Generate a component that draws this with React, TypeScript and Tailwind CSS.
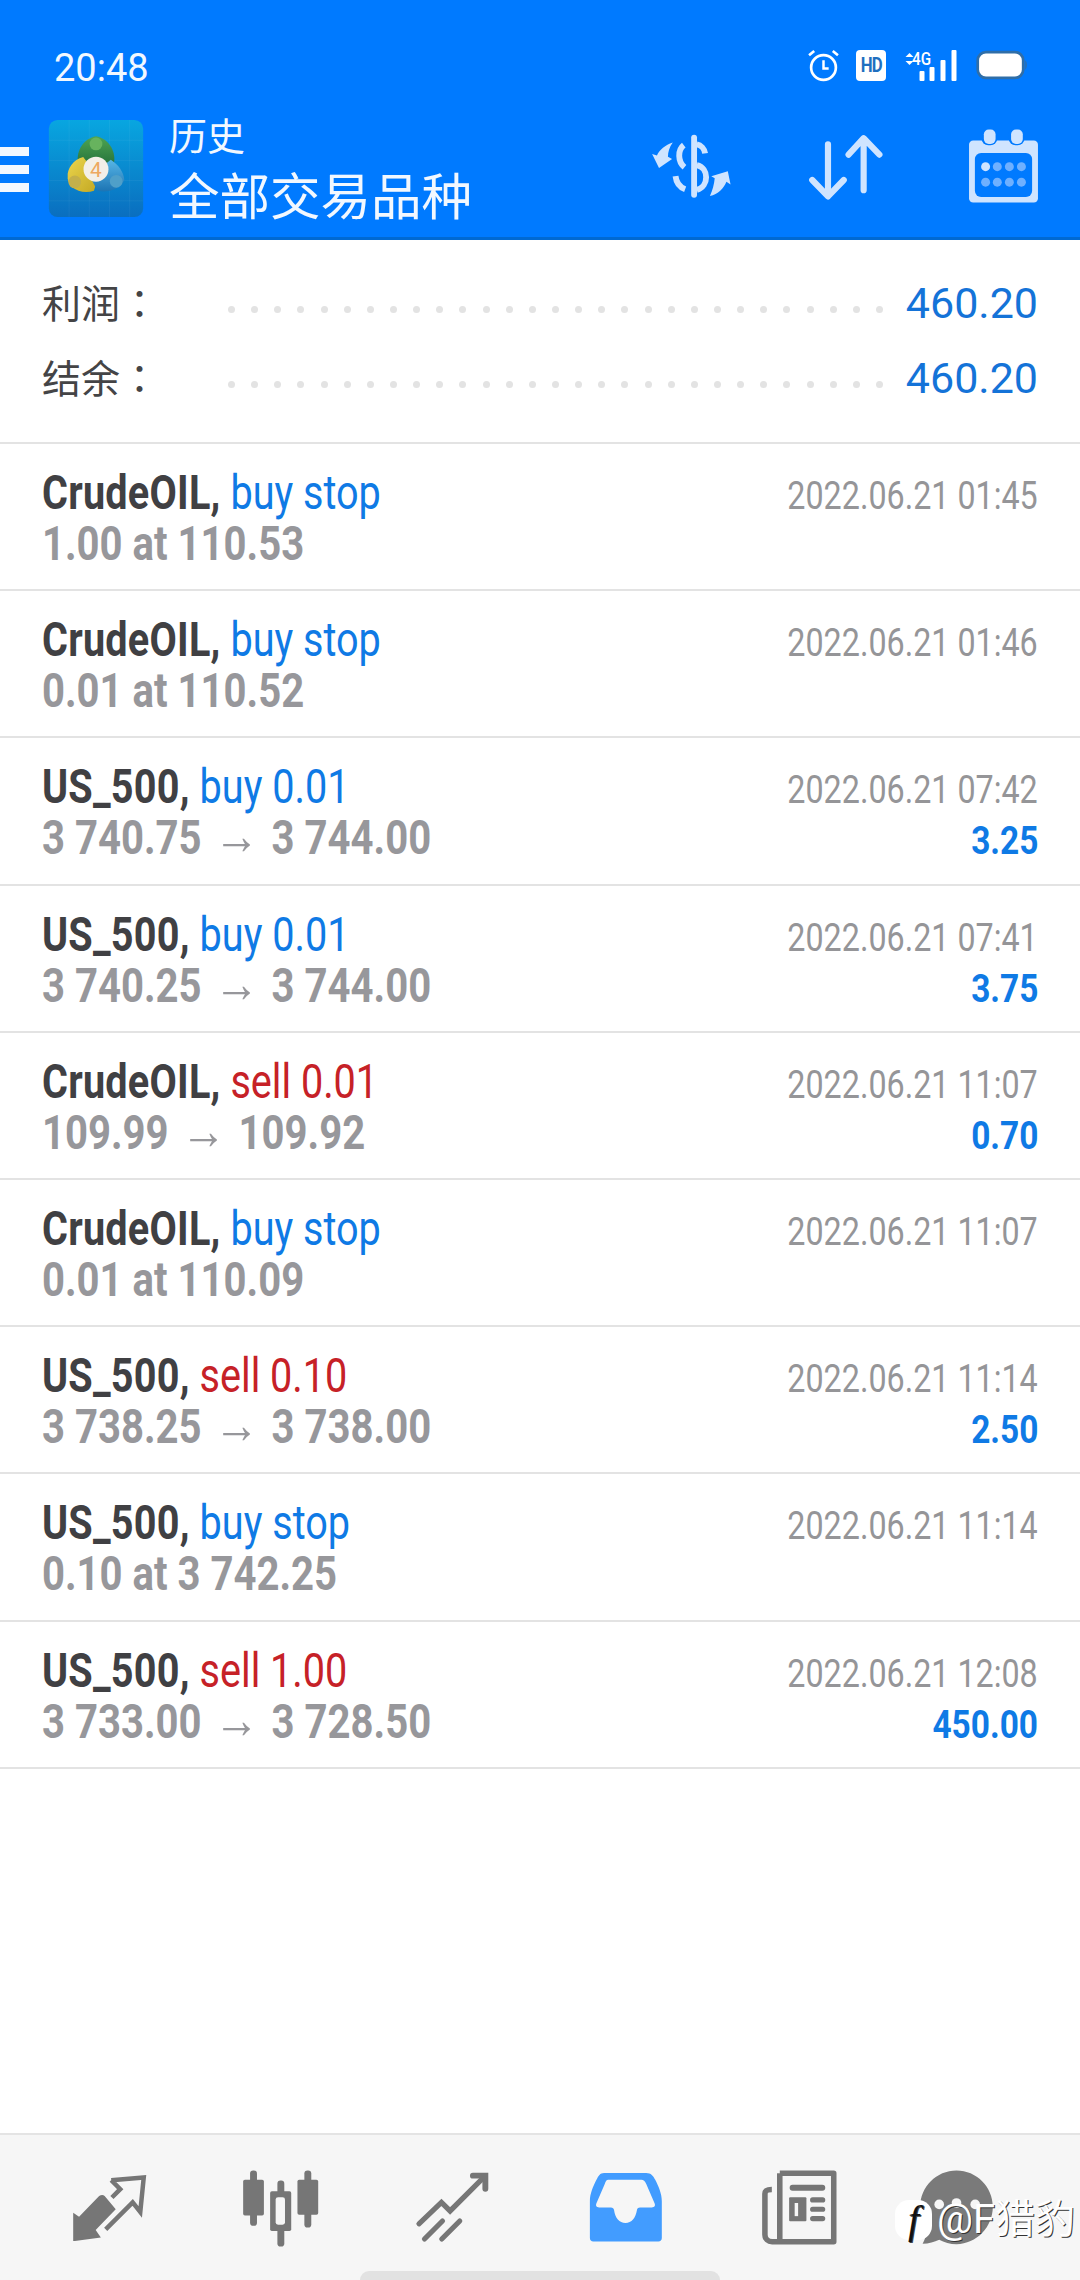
const ROWS = [
  { sym: "CrudeOIL", act: "buy stop", side: "buy", sub: "1.00 at 110.53", time: "2022.06.21 01:45" },
  { sym: "CrudeOIL", act: "buy stop", side: "buy", sub: "0.01 at 110.52", time: "2022.06.21 01:46" },
  { sym: "US_500", act: "buy 0.01", side: "buy", sub: "3 740.75 → 3 744.00", time: "2022.06.21 07:42", profit: "3.25" },
  { sym: "US_500", act: "buy 0.01", side: "buy", sub: "3 740.25 → 3 744.00", time: "2022.06.21 07:41", profit: "3.75" },
  { sym: "CrudeOIL", act: "sell 0.01", side: "sell", sub: "109.99 → 109.92", time: "2022.06.21 11:07", profit: "0.70" },
  { sym: "CrudeOIL", act: "buy stop", side: "buy", sub: "0.01 at 110.09", time: "2022.06.21 11:07" },
  { sym: "US_500", act: "sell 0.10", side: "sell", sub: "3 738.25 → 3 738.00", time: "2022.06.21 11:14", profit: "2.50" },
  { sym: "US_500", act: "buy stop", side: "buy", sub: "0.10 at 3 742.25", time: "2022.06.21 11:14" },
  { sym: "US_500", act: "sell 1.00", side: "sell", sub: "3 733.00 → 3 728.50", time: "2022.06.21 12:08", profit: "450.00" },
];

function Logo() {
  return (
    <svg viewBox="138 360 280 288" className="w-[96px] h-[97px] ml-[19px] shrink-0">
      <defs>
        <linearGradient id="lg" x1="0" y1="0" x2="0" y2="1">
          <stop offset="0" stopColor="#08a6e0" />
          <stop offset="1" stopColor="#0a6ebf" />
        </linearGradient>
        <linearGradient id="gr" x1="0" y1="0" x2="0" y2="1">
          <stop offset="0" stopColor="#4fa552" />
          <stop offset="1" stopColor="#1f6b38" />
        </linearGradient>
        <linearGradient id="ye" x1="0" y1="0" x2="1" y2="1">
          <stop offset="0" stopColor="#ecd64e" />
          <stop offset="1" stopColor="#c2a722" />
        </linearGradient>
        <linearGradient id="bl" x1="0" y1="0" x2="0" y2="1">
          <stop offset="0" stopColor="#58b6e6" />
          <stop offset="1" stopColor="#1c74b4" />
        </linearGradient>
      </defs>
      <rect x="138" y="360" width="280" height="288" rx="26" fill="url(#lg)" />
      <path d="M138 420h280M138 480h280M138 540h280M138 600h280M198 360v288M258 360v288M318 360v288M378 360v288" stroke="#ffffff" strokeOpacity="0.08" strokeWidth="2" />
      <path d="M278 408c-36 6-58 42-54 76l30 22h48l30-22c4-34-18-70-54-76z" fill="url(#gr)" />
      <circle cx="278" cy="431" r="19" fill="#67b35e" />
      <path d="M240 470c-30 6-48 38-46 56-2 10 4 22 12 32 18 16 44 20 66 12l12-42z" fill="url(#ye)" />
      <circle cx="215" cy="544" r="19" fill="#c4b04a" />
      <path d="M322 478c22 14 38 36 40 60-12 26-48 40-80 32l-22-42z" fill="url(#bl)" />
      <circle cx="338" cy="542" r="19" fill="#4f9fc9" />
      <circle cx="278" cy="506" r="37" fill="#f3efe8" />
      <text x="278" y="528" textAnchor="middle" fontSize="62" fill="#eda860" fontFamily="Roboto">4</text>
    </svg>
  );
}

function DollarIcon() {
  return (
    <svg viewBox="310 400 250 200" className="w-[86px] h-[69px]" fill="none">
      <g stroke="#cfe4ff" strokeWidth="17" strokeLinecap="round">
        <path d="M444 416v166" />
        <path d="M476 462c-2-14-12-24-24-26" strokeLinecap="butt" />
        <path d="M414 438c-18 14-18 48 2 64" strokeLinecap="butt" />
        <path d="M452 496c36 8 36 62 0 72" strokeLinecap="butt" />
        <path d="M390 528c2 18 12 32 28 38" strokeLinecap="butt" />
      </g>
      <path d="M382 430c-10 14-14 28-14 42l12 6-38 26-20-40 14 4c8-18 24-30 46-38z" fill="#cfe4ff" />
      <path d="M490 586c8-18 12-34 14-52l-10-6 48-14 8 38-12-8c-8 20-24 36-48 42z" fill="#cfe4ff" />
    </svg>
  );
}

function SortIcon() {
  return (
    <svg viewBox="770 400 240 210" className="w-[83px] h-[72px]" fill="none" stroke="#cfe4ff" strokeWidth="18" strokeLinecap="round" strokeLinejoin="round">
      <path d="M836 436v150M790 540l46 48 46-48" />
      <path d="M940 570V420M896 466l44-48 46 48" />
    </svg>
  );
}

function CalendarIcon() {
  return (
    <svg viewBox="1240 390 206 220" className="w-[71px] h-[76px]">
      <rect x="1243" y="426" width="200" height="180" rx="12" fill="#cfe4ff" />
      <rect x="1260" y="462" width="166" height="128" rx="18" fill="#007aff" />
      <rect x="1279" y="388" width="46" height="52" rx="20" fill="#007aff" />
      <rect x="1358" y="388" width="46" height="52" rx="20" fill="#007aff" />
      <rect x="1286" y="394" width="34" height="42" rx="14" fill="#cfe4ff" />
      <rect x="1365" y="394" width="34" height="42" rx="14" fill="#cfe4ff" />
      <circle cx="1291" cy="502" r="13" fill="#cfe4ff" />
      {[1325, 1360, 1395].map((x) => <circle key={x} cx={x} cy="502" r="13" fill="#6fb0ff" />)}
      {[1291, 1325, 1360, 1395].map((x) => <circle key={x} cx={x} cy="547" r="13" fill="#6fb0ff" />)}
    </svg>
  );
}

function StatusIcons() {
  return (
    <div className="flex items-center text-white">
      <svg viewBox="0 0 32 32" className="w-[33px] h-[33px]" fill="none" stroke="#fff" strokeWidth="2.6">
        <circle cx="16" cy="18" r="12" />
        <path d="M16 11v8h5" strokeWidth="2.4" />
        <path d="M2 6l5-4M30 6l-5-4" />
      </svg>
      <div className="ml-[16px] w-[30px] h-[31px] bg-white rounded-[4px] flex items-center justify-center">
        <span className="text-[#1f6fbf] font-bold text-[21px] leading-none tracking-[-1px] scale-x-[0.8]">HD</span>
      </div>
      <div className="relative ml-[15px] w-[57px] h-[31px]">
        <svg viewBox="0 0 56 31" className="w-[57px] h-[31px]" fill="#fff">
          <path d="M4 7l4-4 4 4zM4 11l4 4 4-4z" />
          <rect x="18" y="21" width="5" height="10" rx="1" />
          <rect x="28" y="17" width="5" height="14" rx="1" />
          <rect x="39" y="10" width="5" height="21" rx="1" />
          <rect x="50" y="0" width="5" height="31" rx="1" />
        </svg>
        <span className="absolute left-[11px] top-[-1px] text-[19px] leading-[20px] font-medium scale-x-[0.8] origin-left">4G</span>
      </div>
      <svg viewBox="0 0 50 30" className="ml-[18px] w-[52px] h-[31px]">
        <rect x="1.5" y="2" width="44" height="25" rx="8" fill="#fff" stroke="#2f6ea8" strokeWidth="2.6" />
        <path d="M47.5 10c2 1 2 8 0 9z" fill="#2f6ea8" />
      </svg>
    </div>
  );
}

function Header() {
  return (
    <header className="bg-[#007aff] border-b-[3px] border-[#0069d2] h-[240px] shrink-0 text-[#f2f8ff]">
      <div className="h-[120px] pl-[54px] pr-[52px] pt-[49px] flex items-start justify-between">
        <span className="text-[38px] leading-[38px]">20:48</span>
        <StatusIcons />
      </div>
      <div className="flex items-start h-[117px]">
        <div className="w-[29px] mt-[27px] flex flex-col gap-[9px] shrink-0">
          <div className="h-[9px] bg-[#f2f8ff]" />
          <div className="h-[9px] bg-[#f2f8ff]" />
          <div className="h-[9px] bg-[#f2f8ff]" />
        </div>
        <Logo />
        <div className="ml-[25px] -mt-[3px]">
          <div className="text-[38px] leading-[40px]">历史</div>
          <div className="text-[50.5px] leading-[60px] mt-[11px] whitespace-nowrap">全部交易品种</div>
        </div>
        <div className="ml-auto flex items-start mt-[12px] mr-[41px]">
          <DollarIcon />
          <div className="ml-[71px]"><SortIcon /></div>
          <div className="ml-[80px] -mt-[4px]"><CalendarIcon /></div>
        </div>
      </div>
    </header>
  );
}

function SummaryRow({ label, value }: { label: string; value: string }) {
  return (
    <div className="flex items-center h-[75px]">
      <span className="text-[39px] w-[186px] shrink-0 text-[#444446] whitespace-nowrap">
        {label}
        <span className="font-['Noto_Sans_CJK_TC',sans-serif]">：</span>
      </span>
      <div className="flex-1 flex justify-between mt-[12px]">
        {Array.from({ length: 29 }).map((_, i) => (
          <span key={i} className="w-[7px] h-[7px] rounded-full bg-[#e3e3e3]" />
        ))}
      </div>
      <span className="w-[155px] text-right text-[43px] text-[#1473d8]">{value}</span>
    </div>
  );
}

function SubLine({ text }: { text: string }) {
  const parts = text.split("→");
  if (parts.length < 2) return <>{text}</>;
  return (
    <>
      {parts[0]}
      <span className="font-['Liberation_Sans',sans-serif] font-normal text-[54px] leading-[0] mx-[3px]">→</span>
      {parts[1]}
    </>
  );
}

function Row({ sym, act, side, sub, time, profit }: (typeof ROWS)[number] & { profit?: string }) {
  return (
    <div className="h-[147.2px] border-b-2 border-[#e3e3e3] pl-[42px] pr-[42px] pt-[23px] flex justify-between">
      <div className="whitespace-nowrap">
        <div className="text-[48px] leading-[51px] origin-left scale-x-[0.825] w-0">
          <span className="font-bold text-[#404043] tracking-[0.3px]">{sym},</span>{" "}
          <span className={side === "sell" ? "text-[#c62127]" : "text-[#0f7ae5]"}>{act}</span>
        </div>
        <div className="text-[48px] leading-[51px] font-bold text-[#97979b] origin-left scale-x-[0.835] w-0">
          <SubLine text={sub} />
        </div>
      </div>
      <div className="flex flex-col items-end whitespace-nowrap">
        <div className="text-[39px] leading-[51px] mt-[4px] text-[#959598] origin-right scale-x-[0.827]">{time}</div>
        {profit && <div className="text-[38px] leading-[51px] font-bold text-[#0f7ae5] origin-right scale-x-[0.88]">{profit}</div>}
      </div>
    </div>
  );
}

const GREY = "#767676";

function NavBar() {
  return (
    <nav className="h-[147px] shrink-0 bg-[#f6f6f6] border-t-2 border-[#e4e4e4] relative">
      <div className="flex pt-[31px]">
        <svg viewBox="200 165 240 240" className="w-[83px] h-[83px] ml-[68px]">
          <path d="M215 300l17 12 58-60c6-4 12-4 16 0l32 38-58 60 15 22-75 10h-5z" fill={GREY} />
          <path d="M325 206l94-8-10 100-22-28-78 78M325 206l26 26-24 24" fill="none" stroke={GREY} strokeWidth="13" strokeLinejoin="miter" />
        </svg>
        <svg viewBox="697 165 240 240" className="w-[83px] h-[83px] ml-[88px]">
          <rect x="729" y="178" width="20" height="160" rx="9" fill={GREY} />
          <rect x="709" y="205" width="60" height="103" rx="5" fill={GREY} />
          <rect x="808" y="207" width="20" height="191" rx="9" fill={GREY} />
          <rect x="787" y="238" width="61" height="115" rx="5" fill={GREY} />
          <rect x="803" y="255" width="27" height="80" rx="7" fill="#f6f6f6" />
          <rect x="886" y="178" width="20" height="165" rx="9" fill={GREY} />
          <rect x="866" y="205" width="60" height="101" rx="5" fill={GREY} />
        </svg>
        <svg viewBox="1197 165 240 240" className="w-[83px] h-[83px] ml-[89px]" fill="none" stroke={GREY} strokeWidth="15" strokeLinecap="round" strokeLinejoin="miter">
          <path d="M1220 332l65-62 25 25 95-95" />
          <path d="M1376 193h36v38" strokeWidth="17" />
          <path d="M1236 376l52-52M1286 376l52-52" />
        </svg>
        <svg viewBox="130 165 240 240" className="w-[83px] h-[83px] ml-[90px]">
          <path d="M188 185h122c14 0 20 8 26 20 10 20 19 40 19 62v106c0 6-4 10-10 10H157c-6 0-10-4-10-10V267c0-22 9-42 19-62 6-12 10-20 22-20z" fill="#429cff" />
          <path d="M200 205h96c6 0 10 4 14 12l24 56c3 7 0 12-8 12h-34c-6 0-8 3-9 8-4 22-15 37-33 37s-30-15-33-37c-1-5-4-8-9-8h-34c-8 0-11-5-8-12l24-56c3-8 5-12 10-12z" fill="#f6f6f6" />
        </svg>
        <svg viewBox="635 165 240 240" className="w-[83px] h-[83px] ml-[91px]" fill="none">
          <path d="M698 186h156v198H676c-12 0-21-8-21-20V245c0-8 6-12 20-12" stroke={GREY} strokeWidth="16" strokeLinejoin="round" />
          <path d="M698 186v198" stroke={GREY} strokeWidth="16" />
          <path d="M735 228h86" stroke={GREY} strokeWidth="17" strokeLinecap="round" />
          <rect x="725" y="255" width="50" height="70" rx="3" fill={GREY} />
          <rect x="741" y="272" width="10" height="38" fill="#f6f6f6" />
          <path d="M793 263h29M793 290h29M793 317h29" stroke={GREY} strokeWidth="15" strokeLinecap="round" />
        </svg>
        <svg viewBox="1090 165 240 240" className="w-[83px] h-[83px] ml-[74px]">
          <path d="M1210 178c58 0 105 47 105 105s-47 108-105 108c-18 0-36-5-50-13-14 6-30 12-48 12 8-14 12-28 10-44-12-18-17-40-17-63 0-58 47-105 105-105z" fill="#7a7a7a" />
          <circle cx="1160" cy="276" r="14" fill="#f6f6f6" />
          <circle cx="1210" cy="272" r="14" fill="#f6f6f6" />
          <circle cx="1264" cy="276" r="14" fill="#f6f6f6" />
        </svg>
      </div>
      {/* home bar */}
      <div className="absolute left-[360px] bottom-0 w-[360px] h-[9px] rounded-t-full bg-[#e2e2e2]" />
      {/* watermark over the last tab */}
      <div className="absolute left-[895px] top-[65px] flex items-center">
        <div className="w-[37px] h-[40px] rounded-[14px] bg-white flex items-center justify-center">
          <span className="font-['Liberation_Serif',serif] italic text-[40px] leading-none text-[#111] [text-shadow:1px_1px_0_#444]">f</span>
        </div>
        <span className="ml-[5px] text-[40px] leading-[40px] text-white whitespace-nowrap [text-shadow:1px_1px_0_#333]">@F猎豹</span>
      </div>
    </nav>
  );
}

export default function App() {
  return (
    <div className="w-[1080px] h-[2280px] bg-white flex flex-col overflow-hidden font-['Roboto','Noto_Sans_CJK_SC',sans-serif]">
      <Header />
      <section className="h-[204px] shrink-0 border-b-2 border-[#e3e3e3] pl-[42px] pr-[42px] pt-[26px]">
        <SummaryRow label="利润" value="460.20" />
        <SummaryRow label="结余" value="460.20" />
      </section>
      <main className="flex-1">
        {ROWS.map((r, i) => (
          <Row key={i} {...r} />
        ))}
      </main>
      <NavBar />
    </div>
  );
}
